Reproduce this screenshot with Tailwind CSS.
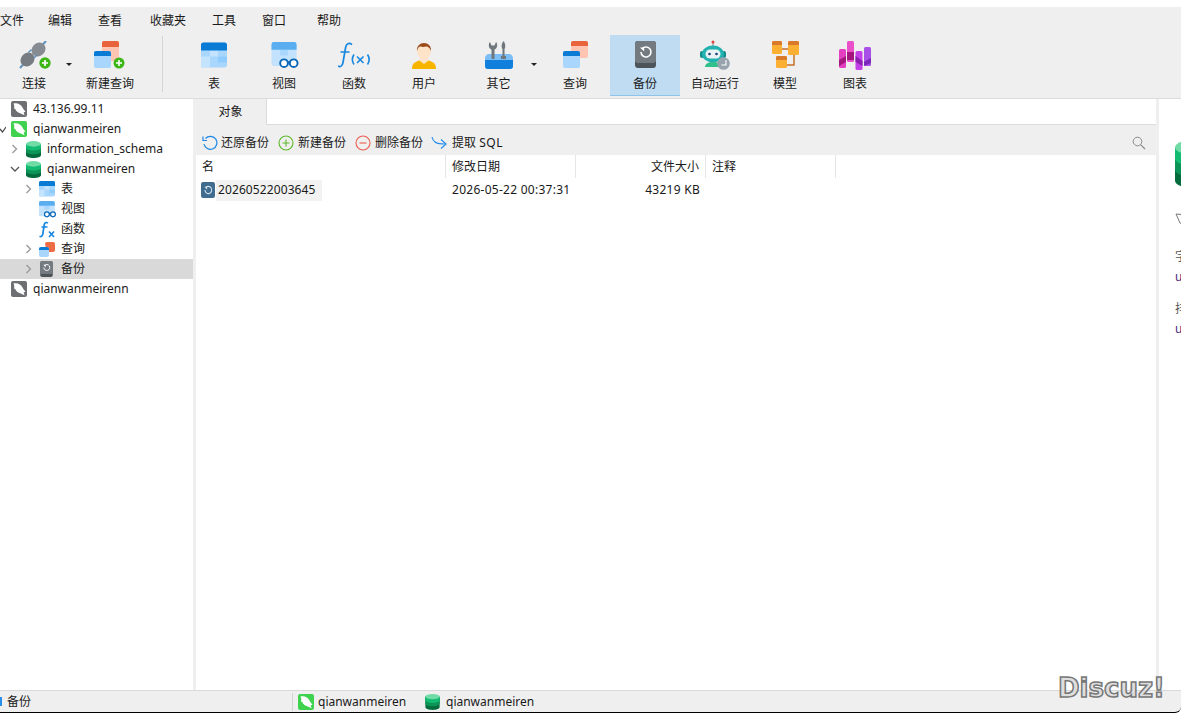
<!DOCTYPE html>
<html lang="zh">
<head>
<meta charset="utf-8">
<script src="https://cdn.jsdelivr.net/npm/@tailwindcss/browser@4"></script>
<title>Navicat</title>
</head>
<body class="m-0 bg-white overflow-hidden">
<svg width="0" height="0" class="absolute">
  <defs>
    <symbol id="tbl" viewBox="0 0 26 26">
      <rect x="0" y="0" width="26" height="25" rx="2.5" fill="#a9d6fd"/>
      <rect x="9" y="8" width="8" height="6" fill="#c4e3fe"/><rect x="0" y="14" width="9" height="11" fill="#c4e3fe"/><rect x="17" y="14" width="9" height="6" fill="#8fcbfc"/>
      <path d="M0 8V2.500A2.500 2.500 0 0 1 2.500 0h21A2.500 2.500 0 0 1 26 2.500V8z" fill="#0a7bd4"/>
    </symbol>
    <symbol id="view" viewBox="0 0 28 28">
      <rect x="0" y="0" width="26" height="25" rx="2.500" fill="#c2e2fe"/>
      <rect x="9" y="8" width="8" height="6" fill="#a9d6fd"/>
      <path d="M0 8V2.500A2.500 2.500 0 0 1 2.500 0h21A2.500 2.500 0 0 1 26 2.500V8z" fill="#5aaef0"/>
      <circle cx="13" cy="22" r="4" fill="#fff" stroke="#0a66b8" stroke-width="2"/><circle cx="23" cy="22" r="4" fill="#fff" stroke="#0a66b8" stroke-width="2"/><path d="M16.500 21h3" stroke="#0a66b8" stroke-width="2"/>
    </symbol>
    <symbol id="fx" viewBox="0 0 32 26">
      <path d="M14 2.200C11 -.3 8.300 1 7.600 5L5 20c-.6 3.600-2.800 4.800-5 3.500M2.500 9.500h9" fill="none" stroke="#1787e0" stroke-width="1.700"/>
      <path d="M16 12c-2 3-2 7 0 10M29.500 12c2 3 2 7 0 10M19 14l6.500 6.500M25.500 14L19 20.500" fill="none" stroke="#1787e0" stroke-width="1.600"/>
    </symbol>
    <symbol id="dolphin" viewBox="0 0 16 16">
      <path d="M2.500 2.500C6.500 1.500 10 3.500 11.500 6.500c.8 1.800 2 3 3 4.200l-1.800.5.8 3L9.800 12.500C7 12 4.800 10 4.300 8L3 7.500C3.500 5.500 3.300 4 2.500 2.500z" fill="#fff"/>
    </symbol>
    <symbol id="db" viewBox="0 0 16 18">
      <path d="M0 3v12c0 1.600 3.500 3 8 3s8-1.400 8-3V3z" fill="#046b3d"/>
      <path d="M0 3v8c0 1.600 3.500 3 8 3s8-1.400 8-3V3z" fill="#0b9455"/>
      <path d="M0 3v4c0 1.600 3.500 3 8 3s8-1.400 8-3V3z" fill="#14bb72"/>
      <ellipse cx="8" cy="3" rx="8" ry="3" fill="#6fdca6"/>
    </symbol>
    <symbol id="bak" viewBox="0 0 21 27">
      <rect x="0" y="0" width="21" height="27" rx="3" fill="#4d5459"/>
      <rect x="0" y="0" width="21" height="22" rx="3" fill="#737a80"/>
      <path d="M7.200 7.700A5 5 0 1 1 6 11" fill="none" stroke="#fff" stroke-width="1.600"/>
      <path d="M5 6.500h4.200v4z" fill="#fff"/>
    </symbol>
    <symbol id="chev" viewBox="0 0 8 10">
      <path d="M1.500 1l4 4-4 4" fill="none" stroke="currentColor" stroke-width="1.300"/>
    </symbol>
  </defs>
</svg>

<div class="relative h-[713px] w-[1181px] flex flex-col font-['Noto_Sans','Noto_Sans_CJK_SC',sans-serif] text-[12px] leading-none text-[#1a1a1a] overflow-hidden">
  <!-- header -->
  <div class="mt-[7px] h-[92px] shrink-0 bg-[#efefef] border-b border-[#dcdcdc] flex flex-col">
    <div class="flex h-[28px] items-center text-[12px]">
      <span class="ml-0 w-[48px]">文件</span>
      <span class="w-[50px]">编辑</span>
      <span class="w-[52px]">查看</span>
      <span class="w-[62px]">收藏夹</span>
      <span class="w-[50px]">工具</span>
      <span class="w-[55px]">窗口</span>
      <span>帮助</span>
    </div>
    <div class="flex h-[61px]">
      <div class="w-[69px] flex flex-col items-center pt-[6px]">
        <svg width="32" height="28" viewBox="0 0 32 28">
          <path d="M27 0l-5 5.500M1 27l5-5.500" stroke="#5f93bd" stroke-width="2"/>
          <ellipse cx="19.500" cy="8.500" rx="7.500" ry="6.500" transform="rotate(-45 19.500 8.500)" fill="#868c91"/>
          <ellipse cx="8.500" cy="18.500" rx="7.500" ry="6.500" transform="rotate(-45 8.500 18.500)" fill="#767c81"/>
          <path d="M9.500 11.500l3-3M15 17l3-3" stroke="#5f93bd" stroke-width="1.500"/>
          <circle cx="26" cy="22" r="5.700" fill="#3fb618"/><path d="M26 19v6M23 22h6" stroke="#fff" stroke-width="1.700"/>
        </svg>
        <span class="mt-[9px] -ml-[1px]">连接</span>
      </div>
      <div class="w-[6px] relative"><span class="absolute left-[-3px] top-[28px] border-x-[3px] border-t-[3px] border-x-transparent border-t-[#222]"></span></div>
      <div class="w-[70px] flex flex-col items-center pt-[6px]">
        <svg width="32" height="28" viewBox="0 0 32 28">
          <rect x="8" y="0" width="17" height="20" rx="2" fill="#ffc4b2"/><path d="M8 6V2a2 2 0 0 1 2-2h13a2 2 0 0 1 2 2v4z" fill="#e8623c"/>
          <rect x="0" y="10" width="17" height="17" rx="2" fill="#a9d6fd"/><path d="M0 15v-3a2 2 0 0 1 2-2h13a2 2 0 0 1 2 2v3z" fill="#0a7bd4"/>
          <circle cx="25" cy="22" r="5.500" fill="#3fb618"/><path d="M25 19v6M22 22h6" stroke="#fff" stroke-width="1.600"/>
        </svg>
        <span class="mt-[9px]">新建查询</span>
      </div>
      <div class="ml-[17px] w-px mt-[1px] mb-[4px] bg-[#d4d4d4]"></div>
      <div class="w-[16px]"></div>
      <div class="w-[70px] flex flex-col items-center pt-[7px]">
        <svg width="26" height="27"><use href="#tbl"/></svg><span class="mt-[9px]">表</span>
      </div>
      <div class="w-[70px] flex flex-col items-center pt-[7px]">
        <svg width="28" height="27" class="ml-[2px]"><use href="#view"/></svg><span class="mt-[9px]">视图</span>
      </div>
      <div class="w-[70px] flex flex-col items-center pt-[7px]">
        <svg width="32" height="27"><use href="#fx"/></svg><span class="mt-[9px]">函数</span>
      </div>
      <div class="w-[70px] flex flex-col items-center pt-[7px]">
        <svg width="24" height="27" viewBox="0 0 24 27">
          <path d="M0 26c0-5 5-8 12-8s12 3 12 8c0 .6-.4 1-1 1H1c-.6 0-1-.4-1-1z" fill="#f7b500"/>
          <path d="M8 14h8v5l-4 3-4-3z" fill="#fde3c8"/><circle cx="12" cy="9.500" r="7" fill="#fde3c8"/>
          <path d="M5 9c-.5-5 3-8 7-8s7.500 3 7 8c-1-3-3-4.500-4.500-4.500-2 .5-6 .5-7 0C6.500 5 5.500 7 5 9z" fill="#9c4a1a"/>
        </svg>
        <span class="mt-[9px]">用户</span>
      </div>
      <div class="w-[80px] relative flex flex-col items-center pt-[6px] pr-[1px]">
        <svg width="28" height="28" viewBox="0 0 28 28">
          <path d="M0 25v-8c0-2 2-4 4-4h20c2 0 4 2 4 4v8c0 2-1 3-3 3H3c-2 0-3-1-3-3z" fill="#7dbdf5"/>
          <path d="M0 19h28v6c0 2-1 3-3 3H3c-2 0-3-1-3-3z" fill="#1180dc"/>
          <path d="M6.500 18V8.500C3.500 7.500 3 3 5 1l1.500 3.500h3L11 1c2 2 1.500 6.500-1.500 7.500V18z" fill="#6f767c"/>
          <path d="M17.500 15V8c-1-1-1.500-5 1-8 2.500 3 2 7 1 8v7h1.500v3h-5v-3z" fill="#6f767c"/>
        </svg>
        <span class="mt-[9px]">其它</span>
        <span class="absolute left-[72px] top-[28px] border-x-[3px] border-t-[3px] border-x-transparent border-t-[#222]"></span>
      </div>
      <div class="w-[71px] flex flex-col items-center pt-[6px] pl-[1px]">
        <svg width="26" height="27" viewBox="0 0 26 27" class="ml-[2px]">
          <rect x="8" y="0" width="17" height="17" rx="2" fill="#ffc4b2"/><path d="M8 5V2a2 2 0 0 1 2-2h13a2 2 0 0 1 2 2v3z" fill="#e8623c"/>
          <rect x="0" y="10" width="17" height="17" rx="2" fill="#a9d6fd"/><path d="M0 15v-3a2 2 0 0 1 2-2h13a2 2 0 0 1 2 2v3z" fill="#0a7bd4"/>
        </svg>
        <span class="mt-[10px]">查询</span>
      </div>
      <div class="w-[70px] flex flex-col items-center pt-[6px] bg-[#bfdcf2] border-b border-[#8fc3ea]">
        <svg width="21" height="27"><use href="#bak"/></svg><span class="mt-[10px]">备份</span>
      </div>
      <div class="w-[70px] flex flex-col items-center pt-[5px]">
        <svg width="30" height="30" viewBox="0 0 30 30">
          <path d="M13 2v5" stroke="#8a939b" stroke-width="1.200"/><circle cx="13" cy="2" r="1.500" fill="#e0443c"/>
          <rect x="0" y="11" width="4" height="7" rx="2" fill="#158a8a"/><rect x="22" y="11" width="4" height="7" rx="2" fill="#158a8a"/>
          <ellipse cx="13" cy="14" rx="11" ry="8.500" fill="#22b3b0"/><rect x="5.500" y="9.500" width="15" height="9" rx="4.500" fill="#eaf3f4"/>
          <circle cx="9.500" cy="14" r="1.300" fill="#1c3c78"/><circle cx="16.500" cy="14" r="1.300" fill="#1c3c78"/>
          <path d="M5 27c0-3 3-5 8-5s8 2 8 5z" fill="#2fc08c"/>
          <circle cx="23.500" cy="23.500" r="6.300" fill="#99a3ad"/><path d="M26 20v5h-4.500" fill="none" stroke="#fff" stroke-width="1.100"/>
        </svg>
        <span class="mt-[8px]">自动运行</span>
      </div>
      <div class="w-[70px] flex flex-col items-center pt-[6px]">
        <svg width="27" height="28" viewBox="0 0 27 28">
          <path d="M10 8h8M22 13v11h-12" fill="none" stroke="#c8702a" stroke-width="1.500"/>
          <rect x="0" y="0" width="10" height="13" rx="1.500" fill="#fbb034"/><path d="M0 4V1.500A1.500 1.500 0 0 1 1.500 0h7A1.500 1.500 0 0 1 10 1.500V4z" fill="#d9792a"/>
          <rect x="16" y="0" width="11" height="14" rx="1.500" fill="#fbb034"/><path d="M16 4V1.500A1.500 1.500 0 0 1 17.500 0h8A1.500 1.500 0 0 1 27 1.500V4z" fill="#d9792a"/>
          <rect x="4" y="15" width="11" height="12" rx="1.500" fill="#fbb034"/><path d="M4 19v-2.500A1.500 1.500 0 0 1 5.500 15h8a1.500 1.500 0 0 1 1.500 1.500V19z" fill="#d9792a"/>
        </svg>
        <span class="mt-[9px]">模型</span>
      </div>
      <div class="w-[70px] flex flex-col items-center pt-[5px]">
        <svg width="32" height="30" viewBox="0 0 32 30">
          <rect x="0" y="9" width="7" height="19" rx="1.500" fill="#e43fc0"/><path d="M0 20l7-4v6l-7 4z" fill="#a5157e"/>
          <rect x="8" y="1" width="7" height="21" rx="1.500" fill="#ea4fc9"/><path d="M8 12h7v8H8z" fill="#a5157e"/>
          <rect x="16.500" y="11" width="7" height="19" rx="1.500" fill="#c43fe8"/><path d="M16.500 16l7 5v5l-7-4z" fill="#8a1fb0"/>
          <rect x="25" y="7" width="7" height="19" rx="1.500" fill="#a84fe8"/><path d="M25 22l7-4v5l-7 3z" fill="#7a28b8"/>
        </svg>
        <span class="mt-[8px]">图表</span>
      </div>
    </div>
  </div>

  <!-- body -->
  <div class="flex flex-1 min-h-0">
    <!-- tree -->
    <div class="w-[193px] shrink-0 relative overflow-hidden">
      <div class="h-5 flex items-center pl-[11px] gap-[6px]"><span class="w-4 h-4 rounded-[2px] bg-[#6d6f72] flex"><svg width="16" height="16"><use href="#dolphin"/></svg></span><span>43.136.99.11</span></div>
      <div class="h-5 flex items-center pl-[11px] gap-[6px] relative"><svg width="6" height="8" viewBox="0 0 6 8" class="absolute left-0 top-[7px]"><path d="M0 3l2.500 3L6 1" fill="none" stroke="#444" stroke-width="1.200"/></svg><span class="w-4 h-4 rounded-[2px] bg-[#3fd24f] flex"><svg width="16" height="16"><use href="#dolphin"/></svg></span><span>qianwanmeiren</span></div>
      <div class="h-5 flex items-center pl-[11px]"><svg width="8" height="10" class="text-[#999]"><use href="#chev"/></svg><svg width="15" height="17" class="ml-[7px]"><use href="#db"/></svg><span class="ml-[6px]">information_schema</span></div>
      <div class="h-5 flex items-center pl-[10px]"><svg width="10" height="8" viewBox="0 0 10 8" class="text-[#555]"><path d="M1 2l4 4 4-4" fill="none" stroke="currentColor" stroke-width="1.300"/></svg><svg width="15" height="17" class="ml-[6px]"><use href="#db"/></svg><span class="ml-[6px]">qianwanmeiren</span></div>
      <div class="h-5 flex items-center pl-[25px]"><svg width="8" height="10" class="text-[#999]"><use href="#chev"/></svg><svg width="16" height="16" class="ml-[6px]"><use href="#tbl"/></svg><span class="ml-[6px]">表</span></div>
      <div class="h-5 flex items-center pl-[39px]"><svg width="17" height="17"><use href="#view"/></svg><span class="ml-[5px]">视图</span></div>
      <div class="h-5 flex items-center pl-[39px]">
        <svg width="17" height="17" viewBox="0 0 17 17"><path d="M9 2C7 .8 5.500 2 5.200 4L3.800 13c-.3 2-1.500 3-3.300 2.300M2.500 6h6" fill="none" stroke="#1787e0" stroke-width="1.700"/><path d="M10 10.500l5 5.500M15 10.500l-5 5.500" stroke="#1787e0" stroke-width="1.700"/></svg>
        <span class="ml-[5px]">函数</span></div>
      <div class="h-5 flex items-center pl-[25px]"><svg width="8" height="10" class="text-[#999]"><use href="#chev"/></svg>
        <svg width="16" height="16" viewBox="0 0 16 16" class="ml-[6px]"><path d="M6 3a2 2 0 0 1 2-2h6a2 2 0 0 1 2 2v6a2 2 0 0 1-2 2H8z" fill="#ed6c45"/><rect x="0" y="6" width="10" height="10" rx="2" fill="#a9d6fd"/><path d="M0 9V8a2 2 0 0 1 2-2h6a2 2 0 0 1 2 2v1z" fill="#0a7bd4"/></svg>
        <span class="ml-[6px]">查询</span></div>
      <div class="h-5 flex items-center pl-[25px] bg-[#d9d9d9]"><svg width="8" height="10" class="text-[#999]"><use href="#chev"/></svg><svg width="13" height="16" class="ml-[7px] mr-[1px]"><use href="#bak"/></svg><span class="ml-[7px]">备份</span></div>
      <div class="h-5 flex items-center pl-[11px] gap-[6px]"><span class="w-4 h-4 rounded-[2px] bg-[#6d6f72] flex"><svg width="16" height="16"><use href="#dolphin"/></svg></span><span>qianwanmeirenn</span></div>
    </div>
    <div class="w-[3px] shrink-0 bg-[#efefef]"></div>

    <!-- main -->
    <div class="w-[960px] shrink-0 flex flex-col">
      <div class="h-[26px] shrink-0 border-b border-[#dcdcdc] flex">
        <div class="w-[71px] bg-[#efefef] border-r border-[#dcdcdc] -mb-px flex items-center justify-center pr-[1px]">对象</div>
      </div>
      <div class="h-[30px] shrink-0 bg-[#efefef] flex items-center pl-[6px] pt-[5px] relative">
        <svg width="16" height="16" viewBox="0 0 16 16"><path d="M3.500 3.500A6.500 6.500 0 1 1 2 9" fill="none" stroke="#1e88e5" stroke-width="1.200"/><path d="M1 1.500v4h4" fill="none" stroke="#1e88e5" stroke-width="1.200"/></svg>
        <span class="ml-[3px]">还原备份</span>
        <svg width="16" height="16" viewBox="0 0 16 16" class="ml-[9px]"><circle cx="8" cy="8" r="7" fill="none" stroke="#5cb82a" stroke-width="1.100"/><path d="M8 4.500v7M4.500 8h7" stroke="#5cb82a" stroke-width="1.100"/></svg>
        <span class="ml-[4px]">新建备份</span>
        <svg width="16" height="16" viewBox="0 0 16 16" class="ml-[9px]"><circle cx="8" cy="8" r="7" fill="none" stroke="#ee5b4f" stroke-width="1.100"/><path d="M4.500 8h7" stroke="#ee5b4f" stroke-width="1.100"/></svg>
        <span class="ml-[4px]">删除备份</span>
        <svg width="16" height="14" viewBox="0 0 16 14" class="ml-[8px]"><path d="M1 1c1 5 4 7 13 7" fill="none" stroke="#2a8fe8" stroke-width="1.200"/><path d="M10 3.500L15 8l-5 4.500" fill="none" stroke="#2a8fe8" stroke-width="1.200"/></svg>
        <span class="ml-[5px]">提取 <span class="tracking-[0.5px]">SQL</span></span>
        <svg width="14" height="14" viewBox="0 0 14 14" class="absolute left-[936px] top-[11px]"><circle cx="5.500" cy="5.500" r="4.300" fill="none" stroke="#8a8a8a" stroke-width="1"/><path d="M8.800 8.800L13 13" stroke="#8a8a8a" stroke-width="1.200"/></svg>
      </div>
      <div class="h-[23px] shrink-0 flex items-center">
        <div class="w-[250px] h-full flex items-center pl-[6px] border-r border-[#e6e6e6]">名</div>
        <div class="w-[130px] h-full flex items-center pl-[6px] border-r border-[#e6e6e6]">修改日期</div>
        <div class="w-[130px] h-full flex items-center justify-end pr-[6px] border-r border-[#e6e6e6]">文件大小</div>
        <div class="w-[130px] h-full flex items-center pl-[6px] border-r border-[#e6e6e6]">注释</div>
      </div>
      <div class="h-[22px] mt-[1px] shrink-0 flex items-center">
        <div class="w-[250px] flex items-center pl-[5px]">
          <svg width="14" height="16" viewBox="0 0 21 22" preserveAspectRatio="none"><rect width="21" height="22" rx="3" fill="#3f6c8f"/><path d="M7.200 7.700A5 5 0 1 1 6 11" fill="none" stroke="#cfe0ec" stroke-width="1.600"/><path d="M5 6.500h4.200v4z" fill="#cfe0ec"/></svg>
          <span class="ml-[1px] h-[21px] px-[2px] w-[106px] flex items-center bg-[#f2f2f2] tracking-[0.1px]">20260522003645</span>
        </div>
        <div class="w-[130px] pl-[6px] tracking-[0.27px]">2026-05-22 00:37:31</div>
        <div class="w-[130px] text-right pr-[6px] tracking-[0.27px]">43219 KB</div>
      </div>
    </div>
    <div class="w-[3px] shrink-0 bg-[#efefef]"></div>

    <!-- info panel -->
    <div class="flex-1 min-w-0 pl-[16px] overflow-hidden pt-[40px] whitespace-nowrap">
      <svg width="48" height="50" viewBox="0 0 16 18" preserveAspectRatio="none" class="block"><use href="#db"/></svg>
      <svg width="14" height="14" viewBox="0 0 14 14" class="block mt-[24px]"><path d="M1 1l11 1-2 10-5-2z" fill="none" stroke="#777" stroke-width="1"/></svg>
      <div class="mt-[24px] text-[#555]">字符集</div>
      <div class="mt-[8px] text-[#4b2a7b]">utf8mb4</div>
      <div class="mt-[20px] text-[#555]">排序规则</div>
      <div class="mt-[8px] text-[#4b2a7b]">utf8mb4_general_ci</div>
    </div>
  </div>

  <!-- status -->
  <div class="h-[23px] shrink-0 bg-[#efefef] border-t border-[#d9d9d9] border-b border-b-black rounded-br-[6px] flex items-center relative">
    <span class="w-[2px] h-[9px] bg-[#2a8fe8]"></span>
    <span class="ml-[5px]">备份</span>
    <span class="absolute left-[292px] top-[2px] h-[18px] w-px bg-[#d4d4d4]"></span>
    <span class="absolute left-[298px] top-[3px] w-4 h-4 rounded-[2px] bg-[#3fd24f] flex"><svg width="16" height="16"><use href="#dolphin"/></svg></span>
    <span class="absolute left-[318px] top-[5px]">qianwanmeiren</span>
    <svg width="15" height="16" class="absolute left-[425px] top-[3px]"><use href="#db"/></svg>
    <span class="absolute left-[446px] top-[5px]">qianwanmeiren</span>
  </div>

  <!-- watermark -->
  <div class="absolute left-[1058px] top-[672px] text-[26px] leading-[32px] font-bold text-[#dedede] [-webkit-text-stroke:1.5px_#777] font-['DejaVu_Sans',sans-serif]">Discuz!</div>
</div>
</body>
</html>
